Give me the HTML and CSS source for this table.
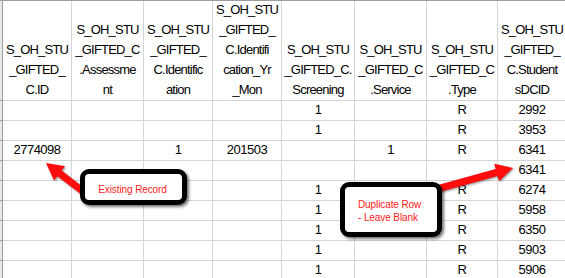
FILE: index.html
```html
<!DOCTYPE html>
<html>
<head>
<meta charset="utf-8">
<link rel="stylesheet" href="styles.css">
</head>
<body>
<div class="page">
  <div class="sheet">
    <div class="gut head"></div>
    <div class="cell head">S_OH_STU<br>_GIFTED_<br>C.ID</div>
    <div class="cell head">S_OH_STU<br>_GIFTED_C<br>.Assessme<br>nt</div>
    <div class="cell head">S_OH_STU<br>_GIFTED_<br>C.Identific<br>ation</div>
    <div class="cell head">S_OH_STU<br>_GIFTED_<br>C.Identifi<br>cation_Yr<br>_Mon</div>
    <div class="cell head">S_OH_STU<br>_GIFTED_C.<br>Screening</div>
    <div class="cell head">S_OH_STU<br>_GIFTED_C<br>.Service</div>
    <div class="cell head">S_OH_STU<br>_GIFTED_C<br>.Type</div>
    <div class="cell head">S_OH_STU<br>_GIFTED_<br>C.Student<br>sDCID</div>

    <div class="gut"></div><div class="cell"></div><div class="cell"></div><div class="cell"></div><div class="cell"></div><div class="cell">1</div><div class="cell"></div><div class="cell">R</div><div class="cell">2992</div>
    <div class="gut"></div><div class="cell"></div><div class="cell"></div><div class="cell"></div><div class="cell"></div><div class="cell">1</div><div class="cell"></div><div class="cell">R</div><div class="cell">3953</div>
    <div class="gut"></div><div class="cell">2774098</div><div class="cell"></div><div class="cell">1</div><div class="cell">201503</div><div class="cell"></div><div class="cell">1</div><div class="cell">R</div><div class="cell">6341</div>
    <div class="gut"></div><div class="cell"></div><div class="cell"></div><div class="cell"></div><div class="cell"></div><div class="cell"></div><div class="cell"></div><div class="cell"></div><div class="cell">6341</div>
    <div class="gut"></div><div class="cell"></div><div class="cell"></div><div class="cell"></div><div class="cell"></div><div class="cell">1</div><div class="cell"></div><div class="cell">R</div><div class="cell">6274</div>
    <div class="gut"></div><div class="cell"></div><div class="cell"></div><div class="cell"></div><div class="cell"></div><div class="cell">1</div><div class="cell"></div><div class="cell">R</div><div class="cell">5958</div>
    <div class="gut"></div><div class="cell"></div><div class="cell"></div><div class="cell"></div><div class="cell"></div><div class="cell">1</div><div class="cell"></div><div class="cell">R</div><div class="cell">6350</div>
    <div class="gut"></div><div class="cell"></div><div class="cell"></div><div class="cell"></div><div class="cell"></div><div class="cell">1</div><div class="cell"></div><div class="cell">R</div><div class="cell">5903</div>
    <div class="gut"></div><div class="cell"></div><div class="cell"></div><div class="cell"></div><div class="cell"></div><div class="cell">1</div><div class="cell"></div><div class="cell">R</div><div class="cell">5906</div>
  </div>

  <svg class="arrows" width="565" height="278" viewBox="0 0 565 278">
    <polygon points="82.9,195.8 57.4,176.2 54.0,180.5 46,163 65.0,166.3 61.6,170.6 87.1,190.2"/>
    <polygon points="436.1,185.6 495.7,169.1 494.2,163.8 513,168 499,181.2 497.5,175.9 437.9,192.4"/>
  </svg>

  <div class="callout callout-existing">Existing Record</div>
  <div class="callout callout-dup">Duplicate Row<br>- Leave Blank</div>
</div>
</body>
</html>
```
FILE: styles.css
```css
html, body {
  margin: 0;
  padding: 0;
  background: #fff;
  overflow: hidden;
}
.page {
  position: relative;
  width: 565px;
  height: 278px;
  overflow: hidden;
}
.sheet {
  display: grid;
  grid-template-columns: 3px 69px 72px 69px 69px 73px 72px 71px 69px;
  grid-auto-rows: 20px;
  grid-template-rows: 100px;
  border-top: 1px solid #9e9e9e;
  font-family: "Liberation Sans", Arial, sans-serif;
  font-size: 13px;
  letter-spacing: -0.5px;
  color: #000;
}
.gut {
  box-sizing: border-box;
  background: #e9e9e9;
  border-right: 1px solid #9e9e9e;
  border-bottom: 1px solid #9e9e9e;
}
.cell {
  box-sizing: border-box;
  border-right: 1px solid #d4d4d4;
  border-bottom: 1px solid #d4d4d4;
  text-align: center;
  white-space: nowrap;
  line-height: 21px;
  display: flex;
  flex-direction: column;
  justify-content: flex-end;
  align-items: center;
}
.cell.head {
  line-height: 20px;
  letter-spacing: -0.8px;
}
.arrows {
  position: absolute;
  left: 0;
  top: 0;
  fill: #ff0d0d;
  filter: drop-shadow(1px 1px 1px rgba(0,0,0,0.45));
}
.callout {
  position: absolute;
  box-sizing: border-box;
  background: #fff;
  border: 5px solid #000;
  border-radius: 9px;
  box-shadow: 2px 2px 3px rgba(0,0,0,0.55);
  color: #ff1a1a;
  font-family: "Liberation Sans", Arial, sans-serif;
  font-size: 10px;
  letter-spacing: -0.1px;
}
.callout-existing {
  left: 80px;
  top: 169px;
  width: 107px;
  height: 36px;
  display: flex;
  align-items: center;
  justify-content: center;
  padding-top: 4px;
  padding-right: 2px;
}
.callout-dup {
  left: 340px;
  top: 182px;
  width: 102px;
  height: 55px;
  padding: 11px 0 0 13px;
  line-height: 13px;
}
```
